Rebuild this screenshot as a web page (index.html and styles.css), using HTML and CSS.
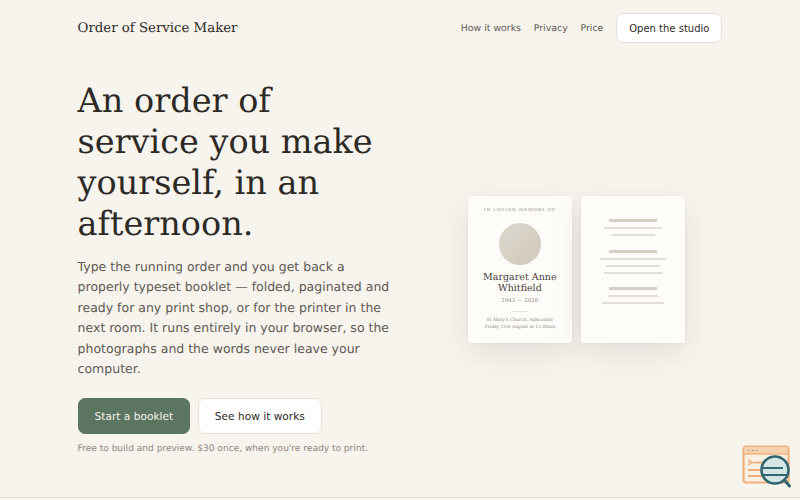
FILE: index.html
```html
<!DOCTYPE html>
<html>
<head>
  <title>Order of Service Maker</title>
  <link rel="stylesheet" href="styles.css">
</head>
<body>
  <div class="page">
    <div class="nav">
      <div class="brand">Order of Service Maker</div>
      <div class="nav-links">
        <a>How it works</a>
        <a>Privacy</a>
        <a>Price</a>
        <button class="btn nav-btn">Open the studio</button>
      </div>
    </div>

    <div class="hero">
      <div class="hero-text">
        <h1>An order of service you make yourself, in an afternoon.</h1>
        <p class="lead">Type the running order and you get back a properly typeset booklet — folded, paginated and ready for any print shop, or for the printer in the next room. It runs entirely in your browser, so the photographs and the words never leave your computer.</p>
        <div class="actions">
          <button class="btn btn-primary">Start a booklet</button>
          <button class="btn">See how it works</button>
        </div>
        <p class="note">Free to build and preview. $30 once, when you're ready to print.</p>
      </div>

      <div class="preview">
        <div class="sheet cover">
          <div class="eyebrow">IN LOVING MEMORY OF</div>
          <div class="photo"></div>
          <div class="name">Margaret Anne Whitfield</div>
          <div class="dates">1943 — 2026</div>
          <div class="rule"></div>
          <div class="venue">St Mary's Church, Adscombe<br>Friday 21st August at 11.00am</div>
        </div>
        <div class="sheet lines">
          <div class="group">
            <span class="bar head"></span>
            <span class="bar w58"></span>
            <span class="bar w43"></span>
          </div>
          <div class="group">
            <span class="bar head"></span>
            <span class="bar w66"></span>
            <span class="bar w53"></span>
            <span class="bar w59"></span>
          </div>
          <div class="group">
            <span class="bar head"></span>
            <span class="bar w49"></span>
            <span class="bar w61"></span>
          </div>
        </div>
      </div>
    </div>
  </div>

  <svg class="badge" width="50" height="44" viewBox="0 0 50 44" fill="none">
    <rect x="1.5" y="1.500" width="45" height="36" rx="2.5" fill="#fbf0e4" stroke="#f0b07e" stroke-width="2.2"/>
    <rect x="2.5" y="2.500" width="43" height="6" fill="#f6d3b0"/>
    <path d="M1.500 9h45" stroke="#f0b07e" stroke-width="1.6"/>
    <path d="M6 5.500h1.500M10 5.500h1.500M14 5.500h1.500" stroke="#a98d78" stroke-width="1.2"/>
    <path d="M6 15l4 2.500-4 2.500" stroke="#f0b07e" stroke-width="1.6"/>
    <path d="M11 17.500h10M6 25h14M6 31h14" stroke="#f0b07e" stroke-width="1.8"/>
    <circle cx="33" cy="25" r="13.500" fill="#d5e5e5" stroke="#2f6670" stroke-width="2.600"/>
    <path d="M21 23h20M21 30h25" stroke="#2f6670" stroke-width="1.800"/>
    <path d="M42.500 35l5 6" stroke="#2f6670" stroke-width="3" stroke-linecap="round"/>
  </svg>
  <div class="footer-line"></div>
</body>
</html>
```

FILE: styles.css
```css
:root {
  --bg-color: #f7f3ed;
  --text-color: #2d2a26;
  --muted-color: #5e5a53;
  --border-color: #e4dfd7;
  --green: #5c7560;
  --bar-color: #d5d0c5;
}

* {
  box-sizing: border-box;
}

html, body {
  height: 100%;
}

body {
  margin: 0;
  background-color: var(--bg-color);
  color: var(--text-color);
  font-family: 'DejaVu Sans', sans-serif;
  text-rendering: geometricPrecision;
  overflow: hidden;
}

.page {
  width: 644.8px;
  margin: 0 auto;
}

.nav {
  display: flex;
  justify-content: space-between;
  align-items: center;
  height: 56px;
}

.brand {
  font-family: 'DejaVu Serif', serif;
  font-size: 13.3px;
  padding-top: 1px;
}

.nav-links {
  display: flex;
  align-items: center;
  gap: 12.8px;
  font-size: 9.4px;
  color: var(--muted-color);
}

.btn {
  font-family: inherit;
  font-size: 10.6px;
  color: var(--text-color);
  background: #fff;
  border: 1px solid var(--border-color);
  border-radius: 7px;
  padding: 0 16px;
  height: 36px;
  cursor: pointer;
}

.nav-btn {
  font-size: 10px;
  height: 30.6px;
  padding: 0 12px;
}

.hero {
  display: flex;
  justify-content: space-between;
  align-items: center;
  margin-top: 24px;
}

.hero-text {
  width: 312px;
}

h1 {
  font-family: 'DejaVu Serif', serif;
  font-weight: 400;
  font-size: 33.5px;
  line-height: 41px;
  margin: 0 0 12.5px;
}

.lead {
  font-size: 12.5px;
  line-height: 20.6px;
  color: var(--muted-color);
  margin: 0 0 17.6px;
}

.actions {
  display: flex;
  gap: 7.7px;
}

.btn-primary {
  background: var(--green);
  border-color: var(--green);
  color: #f4f1ea;
}

.note {
  font-size: 9.05px;
  color: #8d8880;
  margin: 10px 0 0;
}

.preview {
  display: flex;
  gap: 9.6px;
  margin-right: 37.6px;
  margin-top: 6px;
}

.sheet {
  width: 103.6px;
  height: 147px;
  background: #fdfcf9;
  border-radius: 2px;
  box-shadow: 0 0 2px rgba(60, 50, 40, 0.08), 0 10px 30px rgba(60, 50, 40, 0.1);
}

.cover {
  display: flex;
  flex-direction: column;
  align-items: center;
  font-family: 'DejaVu Serif', serif;
  text-align: center;
  padding-top: 12px;
}

.eyebrow {
  font-size: 4.3px;
  letter-spacing: 0.85px;
  color: #8f8b82;
}

.photo {
  width: 42.6px;
  height: 42.6px;
  border-radius: 50%;
  background: linear-gradient(135deg, #dcd7cd, #cfc9bc);
  margin-top: 9.3px;
}

.name {
  font-size: 9.5px;
  line-height: 11px;
  width: 80px;
  margin-top: 7px;
  color: #45423c;
}

.dates {
  font-size: 5.5px;
  color: #8f8b82;
  margin-top: 4px;
}

.rule {
  width: 18px;
  height: 1px;
  background: #e8e4dc;
  margin-top: 7px;
}

.venue {
  font-size: 4.5px;
  line-height: 6.4px;
  color: #8f8b82;
  margin-top: 6px;
  white-space: nowrap;
}

.lines {
  display: flex;
  flex-direction: column;
  align-items: center;
  padding-top: 22.8px;
  gap: 13.5px;
}

.group {
  display: flex;
  flex-direction: column;
  align-items: center;
  gap: 5px;
}

.bar {
  display: block;
  height: 2px;
  background: #e3dfd6;
}

.bar.head {
  width: 48.7px;
  height: 3px;
  background: var(--bar-color);
}

.w43 { width: 43px; }
.w49 { width: 49.7px; }
.w53 { width: 53.3px; }
.w58 { width: 58px; }
.w59 { width: 59px; }
.w61 { width: 61.3px; }
.w66 { width: 65.7px; }

/* corner badge sits over the page */
.badge {
  position: absolute;
  left: 742px;
  top: 445px;
}

.footer-line {
  position: absolute;
  left: 0;
  right: 0;
  top: 497px;
  height: 1px;
  background: var(--border-color);
}
```
